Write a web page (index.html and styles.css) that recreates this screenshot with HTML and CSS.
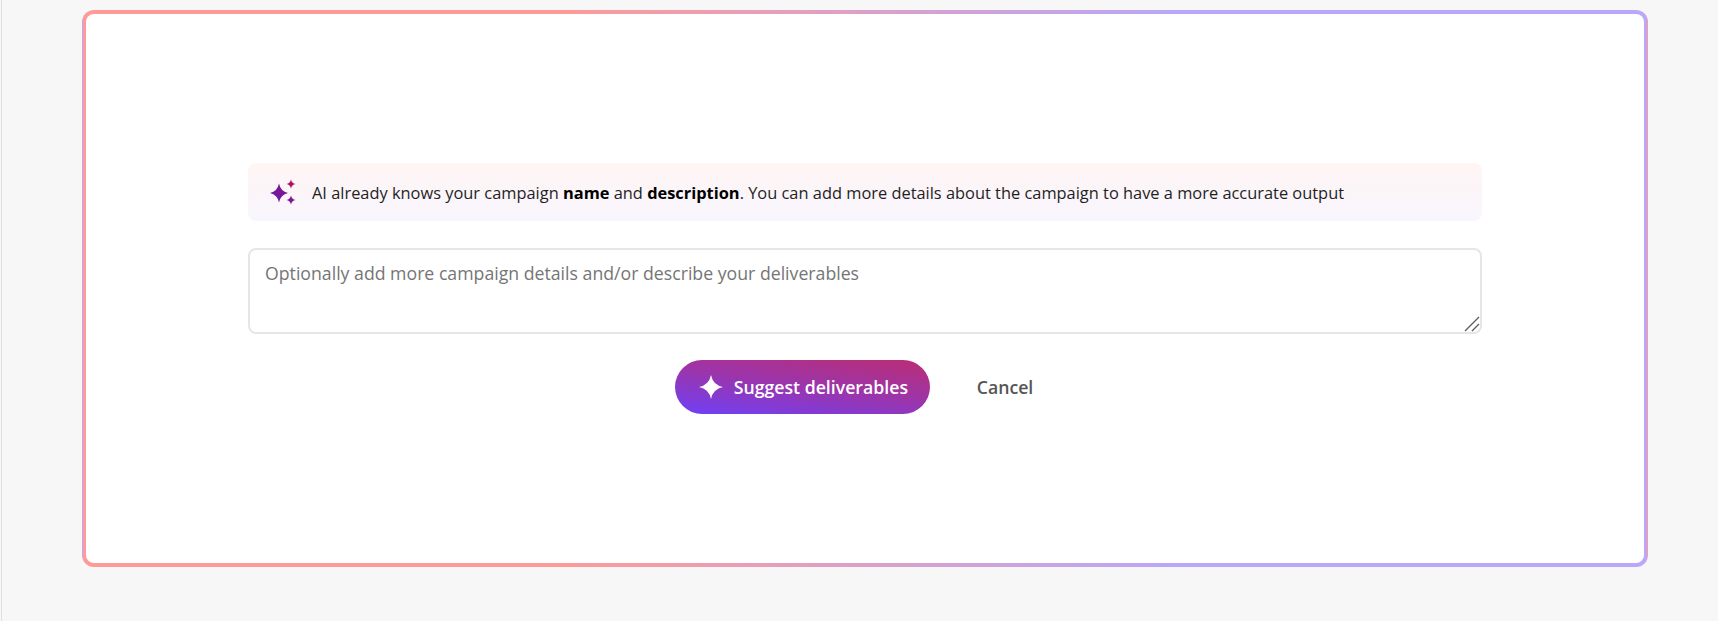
FILE: index.html
```html
<!DOCTYPE html>
<html lang="en">
<head>
<meta charset="utf-8">
<title>Suggest deliverables</title>
<link rel="stylesheet" href="styles.css">
</head>
<body>
<main class="page">
  <section class="frame">
    <div class="panel">
      <div class="notice">
        <svg class="notice-icon" width="28" height="28" viewBox="0 0 28 28" aria-hidden="true">
          <defs>
            <linearGradient id="spark" gradientUnits="userSpaceOnUse" x1="2" y1="24" x2="26" y2="2">
              <stop offset="0" stop-color="#5f1fb8"/>
              <stop offset="0.5" stop-color="#7d1592"/>
              <stop offset="1" stop-color="#c80f48"/>
            </linearGradient>
          </defs>
          <path fill="url(#spark)" d="M10 5.500Q11.600 13.400 19 15Q11.600 16.600 10 24.500Q8.400 16.600 1 15Q8.400 13.400 10 5.500Z"/>
          <path fill="url(#spark)" d="M22 1.500Q22.800 5.200 26.500 6Q22.800 6.800 22 10.500Q21.200 6.800 17.500 6Q21.200 5.200 22 1.500Z"/>
          <path fill="url(#spark)" d="M22 17.500Q22.800 21.200 26.500 22Q22.800 22.800 22 26.500Q21.200 22.800 17.500 22Q21.200 21.200 22 17.500Z"/>
        </svg>
        <p class="notice-text">AI already knows your campaign <strong>name</strong> and <strong>description</strong>. You can add more details about the campaign to have a more accurate output</p>
      </div>
      <div class="details-wrap">
        <textarea class="details" placeholder="Optionally add more campaign details and/or describe your deliverables"></textarea>
        <svg class="grip" width="16" height="16" viewBox="0 0 16 16" aria-hidden="true">
          <path d="M1 15L15 1M8 15L15 8" stroke="#5f5f5f" stroke-width="1.400" fill="none"/>
        </svg>
      </div>
      <div class="actions">
        <button class="btn-primary" type="button">
          <svg width="26" height="26" viewBox="0 0 26 26" aria-hidden="true">
            <path fill="#fff" d="M13 1Q15 11 25 13Q15 15 13 25Q11 15 1 13Q11 11 13 1Z"/>
          </svg>
          <span>Suggest deliverables</span>
        </button>
        <button class="btn-cancel" type="button">Cancel</button>
      </div>
    </div>
  </section>
</main>
</body>
</html>
```

FILE: styles.css
```css
* { box-sizing: border-box; }

html, body {
  margin: 0;
  height: 100%;
  background: #f7f7f7;
}

body {
  font-family: "Open Sans", "Noto Sans", "Liberation Sans", sans-serif;
  color: #1a1a1a;
  overflow: hidden;
}

.page {
  height: 621px;
  margin-left: 1px;
  border-left: 1px solid #e0e0e0;
  padding: 10px 70px 54px 80px;
}

.frame {
  height: 557px;
  border: 1px solid transparent;
  border-radius: 12px;
  padding: 3px;
  background-image: linear-gradient(90deg, #ff9a96 0%, #ff9a96 30%, #b9a7fa 70%, #b9a7fa 100%);
  background-origin: padding-box;
  background-clip: border-box;
}

.panel {
  height: 100%;
  border-radius: 8px;
  background: #fff;
  padding: 0 162px;
  display: flex;
  flex-direction: column;
  justify-content: center;
}

.notice {
  height: 58px;
  border-radius: 8px;
  background: linear-gradient(180deg, #fff5f4 0%, #f8f6fe 100%);
  display: flex;
  align-items: center;
  gap: 15px;
  padding: 0 20px 0 21px;
}

.notice-icon { flex: none; }

.notice-text {
  margin: 1px 0 0;
  font-size: 16.400px;
  line-height: 22px;
  color: #1f1f1f;
}

.notice-text strong { font-weight: 700; color: #000; }

.details-wrap {
  position: relative;
  margin-top: 27px;
}

.details {
  display: block;
  width: 100%;
  height: 86px;
  padding: 11px 15px;
  border: 2px solid #e6e6e6;
  border-radius: 8px;
  background: #fff;
  font-family: inherit;
  font-size: 17.700px;
  line-height: 24px;
  outline: none;
  resize: none;
}

.details::placeholder { color: #757575; opacity: 1; }

.grip {
  position: absolute;
  right: 2px;
  bottom: 2px;
}

.actions {
  display: flex;
  justify-content: center;
  align-items: center;
  margin-top: 26px;
  padding-right: 22px;
  gap: 47px;
}

.btn-primary {
  height: 54px;
  width: 255px;
  border: 0;
  border-radius: 27px;
  padding: 0 0 0 23px;
  display: flex;
  align-items: center;
  gap: 10px;
  background: linear-gradient(188deg, #bb2d73 0%, #9a35ad 50%, #6f40f7 100%);
  color: #fff;
  font-family: inherit;
  font-size: 17.700px;
  font-weight: 600;
  white-space: nowrap;
}

.btn-cancel {
  border: 0;
  padding: 0;
  background: none;
  color: #555;
  font-family: inherit;
  font-size: 17.700px;
  font-weight: 600;
}
```
